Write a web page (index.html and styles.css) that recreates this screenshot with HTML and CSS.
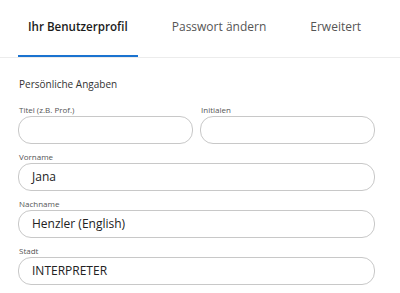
FILE: index.html
```html
<!DOCTYPE html>
<html lang="de">
<head>
<meta charset="utf-8">
<title>Profil</title>
<link rel="stylesheet" href="styles.css">
</head>
<body>
<nav class="tabs">
  <div class="tab active">Ihr Benutzerprofil</div>
  <div class="tab">Passwort ändern</div>
  <div class="tab">Erweitert</div>
</nav>
<main class="form">
  <h2 class="section-title">Persönliche Angaben</h2>
  <div class="row">
    <div class="field">
      <label class="label">Titel (z.B. Prof.)</label>
      <div class="input"></div>
    </div>
    <div class="field">
      <label class="label">Initialen</label>
      <div class="input"></div>
    </div>
  </div>
  <div class="field">
    <label class="label">Vorname</label>
    <div class="input">Jana</div>
  </div>
  <div class="field">
    <label class="label">Nachname</label>
    <div class="input">Henzler (English)</div>
  </div>
  <div class="field">
    <label class="label">Stadt</label>
    <div class="input">INTERPRETER</div>
  </div>
</main>
</body>
</html>
```
FILE: styles.css
```css
* { box-sizing: border-box; }
body {
  margin: 0;
  background: #fff;
  font-family: "Open Sans", "Noto Sans", sans-serif;
  color: #222;
  overflow: hidden;
}
.tabs {
  display: flex;
  gap: 24px;
  padding-left: 18px;
  border-bottom: 1px solid #ececec;
}
.tab {
  padding: 19px 10px 20px;
  line-height: 16px;
  font-size: 12px;
  color: #555;
  border-bottom: 2px solid transparent;
}
.tab.active {
  color: #1b1b1b;
  font-weight: 600;
  font-size: 11.6px;
  border-bottom-color: #1a73d0;
}
.form {
  padding: 0 25px 0 18px;
  display: flex;
  flex-direction: column;
  gap: 7px;
}
.section-title {
  margin: 19px 0 6px 1px;
  font-size: 10px;
  font-weight: 400;
  line-height: 14px;
  color: #333;
}
.row {
  display: grid;
  grid-template-columns: 1fr 1fr;
  gap: 7px;
}
.field {
  display: flex;
  flex-direction: column;
}
.label {
  font-size: 8px;
  line-height: 12px;
  color: #555;
  padding-left: 1px;
}
.input {
  height: 28px;
  border: 1px solid #c8c8c8;
  border-radius: 13px;
  padding-left: 13px;
  font-size: 12px;
  line-height: 26px;
  color: #222;
}
```
